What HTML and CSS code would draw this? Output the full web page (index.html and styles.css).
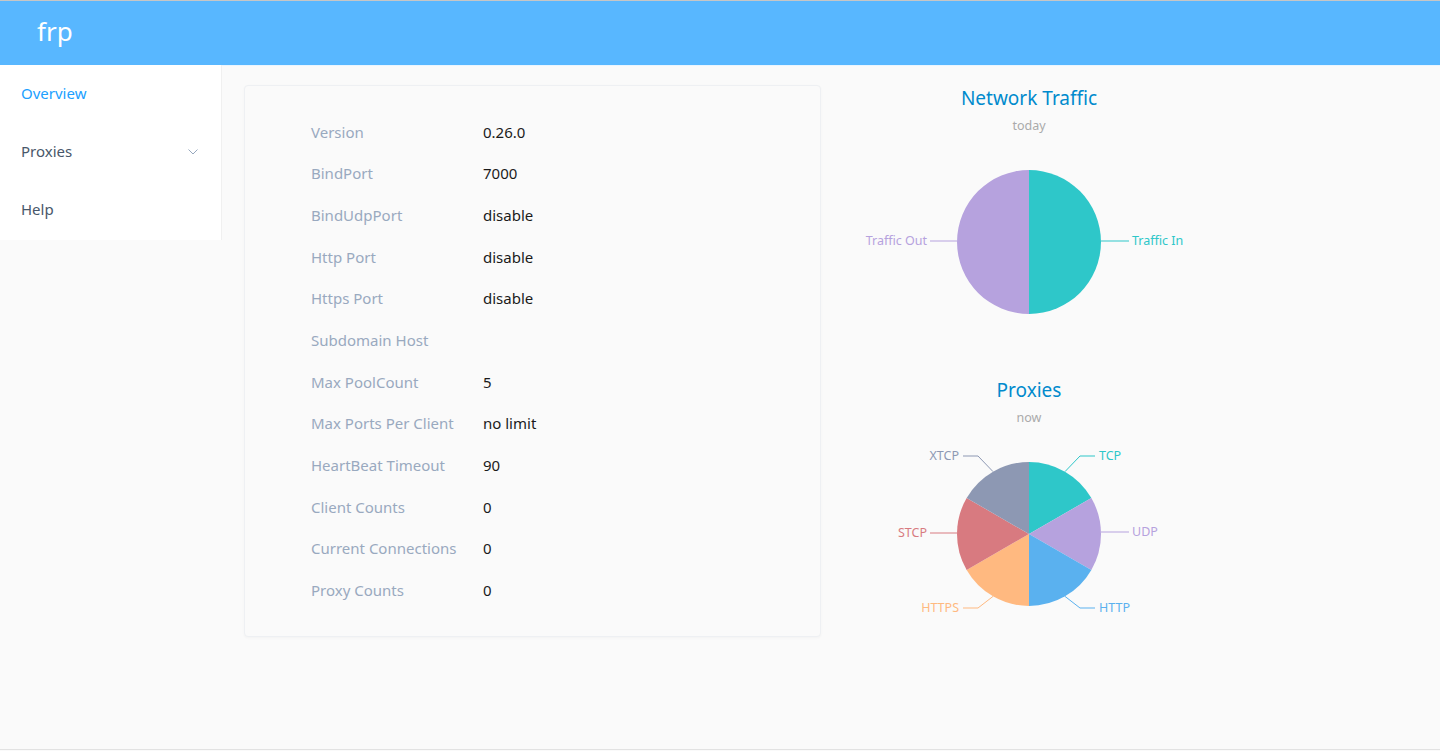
FILE: index.html
```html
<!DOCTYPE html>
<html>
<head>
<meta charset="utf-8">
<title>frp</title>
<link rel="stylesheet" href="styles.css">
</head>
<body>
<div class="page">
  <header class="header"><span class="brand">frp</span></header>
  <div class="body">
    <nav class="sidebar">
      <div class="menu-item active">Overview</div>
      <div class="menu-item">Proxies
        <svg class="chev" width="10" height="6" viewBox="0 0 10 6"><path d="M0.5 0.5 L5 5 L9.5 0.5" fill="none" stroke="#97a8be" stroke-width="1"/></svg>
      </div>
      <div class="menu-item">Help</div>
    </nav>
    <main class="main">
      <section class="card">
        <div class="row"><span class="label">Version</span><span class="value">0.26.0</span></div>
        <div class="row"><span class="label">BindPort</span><span class="value">7000</span></div>
        <div class="row"><span class="label">BindUdpPort</span><span class="value">disable</span></div>
        <div class="row"><span class="label">Http Port</span><span class="value">disable</span></div>
        <div class="row"><span class="label">Https Port</span><span class="value">disable</span></div>
        <div class="row"><span class="label">Subdomain Host</span><span class="value"></span></div>
        <div class="row"><span class="label">Max PoolCount</span><span class="value">5</span></div>
        <div class="row"><span class="label">Max Ports Per Client</span><span class="value">no limit</span></div>
        <div class="row"><span class="label">HeartBeat Timeout</span><span class="value">90</span></div>
        <div class="row"><span class="label">Client Counts</span><span class="value">0</span></div>
        <div class="row"><span class="label">Current Connections</span><span class="value">0</span></div>
        <div class="row"><span class="label">Proxy Counts</span><span class="value">0</span></div>
      </section>
      <section class="charts">
        <svg class="chart" width="400" height="292" viewBox="0 0 400 292">
          <text class="ctitle" x="200" y="40" text-anchor="middle">Network Traffic</text>
          <text class="csub" x="200" y="65" text-anchor="middle">today</text>
          <path d="M200 177 L200 105 A72 72 0 0 1 200 249 Z" fill="#2ec7c9"/>
          <path d="M200 177 L200 249 A72 72 0 0 1 200 105 Z" fill="#b6a2de"/>
          <path d="M272 176 H300" stroke="#2ec7c9" fill="none"/>
          <path d="M128 176 H101" stroke="#b6a2de" fill="none"/>
          <text class="clabel" x="303" y="180" fill="#2ec7c9">Traffic In</text>
          <text class="clabel" x="98" y="180" fill="#b6a2de" text-anchor="end">Traffic Out</text>
        </svg>
        <svg class="chart" width="400" height="292" viewBox="0 0 400 292">
          <text class="ctitle" x="200" y="40" text-anchor="middle">Proxies</text>
          <text class="csub" x="200" y="65" text-anchor="middle">now</text>
          <path d="M200 177 L200 105 A72 72 0 0 1 262.35 141 Z" fill="#2ec7c9"/>
          <path d="M200 177 L262.35 141 A72 72 0 0 1 262.35 213 Z" fill="#b6a2de"/>
          <path d="M200 177 L262.35 213 A72 72 0 0 1 200 249 Z" fill="#5ab1ef"/>
          <path d="M200 177 L200 249 A72 72 0 0 1 137.65 213 Z" fill="#ffb980"/>
          <path d="M200 177 L137.65 213 A72 72 0 0 1 137.65 141 Z" fill="#d87a80"/>
          <path d="M200 177 L137.65 141 A72 72 0 0 1 200 105 Z" fill="#8d98b3"/>
          <path d="M236 114.6 L251 99 H266" stroke="#2ec7c9" fill="none"/>
          <path d="M272 175 H300" stroke="#b6a2de" fill="none"/>
          <path d="M236 239.4 L251 251 H266" stroke="#5ab1ef" fill="none"/>
          <path d="M164 239.4 L149 251 H134" stroke="#ffb980" fill="none"/>
          <path d="M128 176 H101" stroke="#d87a80" fill="none"/>
          <path d="M164 114.6 L149 99 H134" stroke="#8d98b3" fill="none"/>
          <text class="clabel" x="270" y="103" fill="#2ec7c9">TCP</text>
          <text class="clabel" x="303" y="179" fill="#b6a2de">UDP</text>
          <text class="clabel" x="270" y="255" fill="#5ab1ef">HTTP</text>
          <text class="clabel" x="130" y="255" fill="#ffb980" text-anchor="end">HTTPS</text>
          <text class="clabel" x="98" y="180" fill="#d87a80" text-anchor="end">STCP</text>
          <text class="clabel" x="130" y="103" fill="#8d98b3" text-anchor="end">XTCP</text>
        </svg>
      </section>
    </main>
  </div>
</div>
</body>
</html>
```

FILE: styles.css
```css
* { box-sizing: border-box; }
html, body {
  margin: 0;
  padding: 0;
  background: #fafafa;
  font-family: "Noto Sans", "Open Sans", sans-serif;
}
.page {
  height: 750px;
  border-bottom: 1px solid #e2e2e2;
  display: flex;
  flex-direction: column;
  overflow: hidden;
}
.header {
  height: 66px;
  flex: none;
  background: #58b7ff;
  border-top: 1px solid #c6c6c6;
  border-bottom: 1px solid #e9f5ff;
  display: flex;
  align-items: center;
  padding-left: 37px;
}
.brand {
  color: #fff;
  font-size: 26px;
  line-height: 1;
  margin-top: -5px;
}
.body {
  display: flex;
  align-items: flex-start;
  flex: 1;
  margin-top: -1px;
}
.sidebar {
  width: 222px;
  flex: none;
  background: #fff;
  border-right: 1px solid #f0f0f0;
  padding-top: 1px;
}
.menu-item {
  height: 58px;
  display: flex;
  align-items: center;
  justify-content: space-between;
  padding: 0 21px 5px;
  font-size: 15px;
  color: #48576a;
}
.menu-item.active { color: #20a0ff; }
.chev { margin-right: 2px; margin-top: 2px; }
.main {
  flex: 1;
  display: flex;
  align-items: flex-start;
}
.card {
  width: 577px;
  height: 552px;
  margin: 20px 0 0 22px;
  background: #fafafa;
  border: 1px solid #eef0f3;
  border-radius: 4px;
  box-shadow: 0 1px 3px rgba(0, 0, 0, 0.03);
  padding: 25px 0 0 66px;
}
.row {
  display: flex;
  height: 41.65px;
  align-items: center;
  font-size: 15px;
}
.label {
  width: 172px;
  color: #99a9bf;
}
.value { color: #1a1a1a; }
.charts {
  display: flex;
  flex-direction: column;
  margin-left: 8px;
}
.chart { display: block; }
.ctitle {
  font-family: "Noto Sans", "Open Sans", sans-serif;
  font-size: 19px;
  fill: #008acd;
}
.csub {
  font-family: "Noto Sans", "Open Sans", sans-serif;
  font-size: 12.5px;
  fill: #aaaaaa;
}
.clabel {
  font-family: "Noto Sans", "Open Sans", sans-serif;
  font-size: 12.5px;
}
```
